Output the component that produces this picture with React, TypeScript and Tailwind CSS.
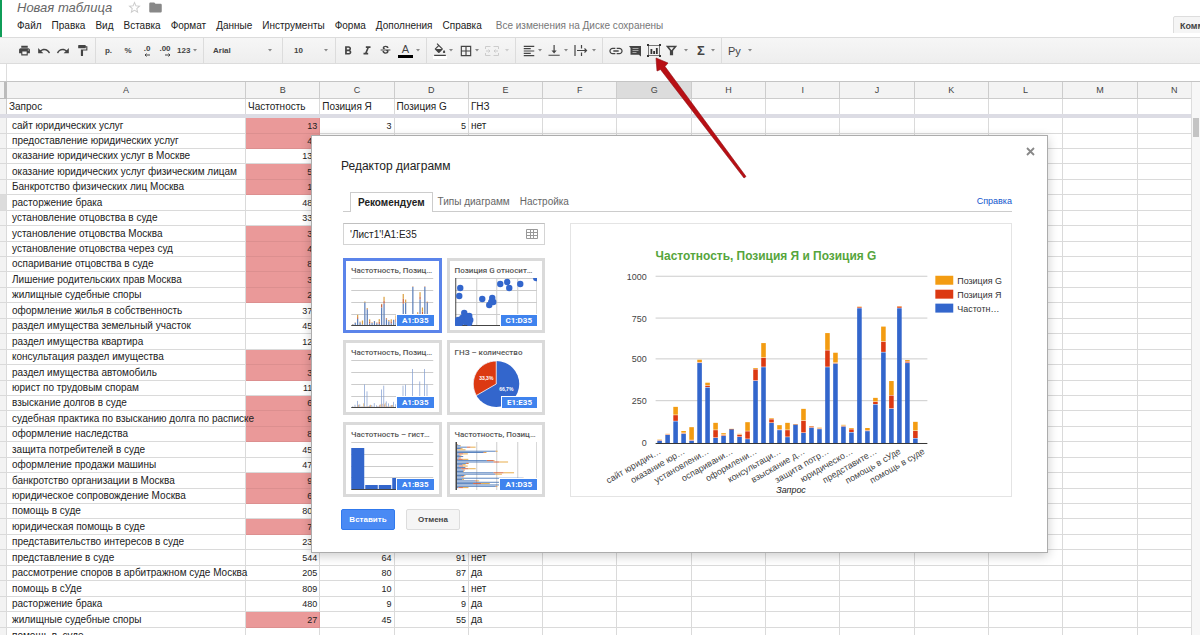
import type { ReactNode } from 'react';
import {
  MdPrint,
  MdUndo,
  MdRedo,
  MdFormatPaint,
  MdStarBorder,
  MdFolder,
  MdFormatBold,
  MdFormatItalic,
  MdStrikethroughS,
  MdFormatColorFill,
  MdBorderAll,
  MdFormatAlignLeft,
  MdLink,
} from 'react-icons/md';

type Row = { query: string; freq: number; ya: number; g: number; gnz?: string };

const rows: Row[] = [
  { query: 'сайт юридических услуг', freq: 13, ya: 3, g: 5, gnz: 'нет' },
  { query: 'предоставление юридических услуг', freq: 48, ya: 3, g: 4 },
  { query: 'оказание юридических услуг в Москве', freq: 130, ya: 37, g: 50 },
  { query: 'оказание юридических услуг физическим лицам', freq: 55, ya: 4, g: 13 },
  { query: 'Банкротство физических лиц Москва', freq: 13, ya: 3, g: 79 },
  { query: 'расторжение брака', freq: 480, ya: 3, g: 17 },
  { query: 'установление отцовства в суде', freq: 333, ya: 11, g: 18 },
  { query: 'установление отцовства Москва', freq: 30, ya: 47, g: 44 },
  { query: 'установление отцовства через суд', freq: 42, ya: 6, g: 11 },
  { query: 'оспаривание отцовства в суде', freq: 83, ya: 1, g: 1 },
  { query: 'Лишение родительских прав Москва', freq: 36, ya: 13, g: 6 },
  { query: 'жилищные судебные споры', freq: 23, ya: 47, g: 55 },
  { query: 'оформление жилья в собственность', freq: 373, ya: 69, g: 8 },
  { query: 'раздел имущества земельный участок', freq: 455, ya: 56, g: 89 },
  { query: 'раздел имущества квартира', freq: 120, ya: 22, g: 7 },
  { query: 'консультация раздел имущества', freq: 77, ya: 3, g: 27 },
  { query: 'раздел имущества автомобиль', freq: 35, ya: 42, g: 44 },
  { query: 'юрист по трудовым спорам', freq: 110, ya: 1, g: 1 },
  { query: 'взыскание долгов в суде', freq: 60, ya: 73, g: 72 },
  { query: 'судебная практика по взысканию долга по расписке', freq: 91, ya: 8, g: 3 },
  { query: 'оформление наследства', freq: 83, ya: 3, g: 6 },
  { query: 'защита потребителей в суде', freq: 455, ya: 101, g: 104 },
  { query: 'оформление продажи машины', freq: 476, ya: 4, g: 62 },
  { query: 'банкротство организации в Москва', freq: 98, ya: 4, g: 7 },
  { query: 'юридическое сопровождение Москва', freq: 63, ya: 19, g: 8 },
  { query: 'помощь в суде', freq: 809, ya: 7, g: 5 },
  { query: 'юридическая помощь в суде', freq: 71, ya: 3, g: 16 },
  { query: 'представительство интересов в суде', freq: 231, ya: 16, g: 24 },
  { query: 'представление в суде', freq: 544, ya: 64, g: 91, gnz: 'нет' },
  { query: 'рассмотрение споров в арбитражном суде Москва', freq: 205, ya: 80, g: 87, gnz: 'да' },
  { query: 'помощь в сУде', freq: 809, ya: 10, g: 1, gnz: 'нет' },
  { query: 'расторжение брака', freq: 480, ya: 9, g: 9, gnz: 'да' },
  { query: 'жилищные судебные споры', freq: 27, ya: 45, g: 55, gnz: 'да' },
];

const letters = ['A', 'B', 'C', 'D', 'E', 'F', 'G', 'H', 'I', 'J', 'K', 'L', 'M', 'N'];
const emptyColumns = ['F', 'G', 'H', 'I', 'J', 'K', 'L', 'M', 'N'];

const menu = ['Файл', 'Правка', 'Вид', 'Вставка', 'Формат', 'Данные', 'Инструменты', 'Форма', 'Дополнения', 'Справка'];

const BLUE = '#3366cc';
const RED = '#dc3912';
const ORANGE = '#f39c12';

function Caret({ faded = false }: { faded?: boolean }) {
  return (
    <svg viewBox="0 0 4 3" className={faded ? 'h-[3px] w-1 fill-[#ccc]' : 'h-[3px] w-1 fill-[#888]'} aria-hidden="true">
      <path d="M0 0h4L2 2.5z" />
    </svg>
  );
}

function Tool({ label, className, children }: { label: string; className: string; children: ReactNode }) {
  return (
    <button type="button" aria-label={label} className={`flex h-full shrink-0 items-center justify-center ${className}`}>
      {children}
    </button>
  );
}

function DropTool({
  label,
  className,
  faded,
  children,
}: {
  label: string;
  className: string;
  faded?: boolean;
  children: ReactNode;
}) {
  return (
    <button type="button" aria-label={label} className={`flex h-full shrink-0 items-center justify-between px-[3px] ${className}`}>
      {children}
      <Caret faded={faded} />
    </button>
  );
}

function Separator() {
  return <div className="mx-[3px] h-full w-px shrink-0 bg-[#dcdcdc]" />;
}

function DecimalIcon({ text, direction }: { text: string; direction: 'left' | 'right' }) {
  return (
    <span className="flex flex-col items-end">
      <span className="leading-[8px]">{text}</span>
      <svg viewBox="0 0 6 4" className="h-1 w-1.5 stroke-[#444]" fill="none" aria-hidden="true">
        <path d={direction === 'left' ? 'M6 2H1M2.5.5L1 2l1.500 1.500' : 'M0 2h5M3.500.5L5 2 3.500 3.500'} />
      </svg>
    </span>
  );
}

function Toolbar() {
  return (
    <div className="flex h-[27px] shrink-0 items-stretch overflow-hidden border-y border-[#dcdcdc] bg-linear-to-b from-[#f6f6f6] to-[#eee] pl-[14px] text-[8px] font-bold text-[#444]">
      <Tool label="Печать" className="w-5"><MdPrint size={13} /></Tool>
      <Tool label="Отменить" className="w-[19px]"><MdUndo size={14} /></Tool>
      <Tool label="Повторить" className="w-5"><MdRedo size={14} /></Tool>
      <Tool label="Копировать форматирование" className="w-[19px]"><MdFormatPaint size={13} /></Tool>
      <Separator />
      <Tool label="Денежный формат" className="w-[19px]">р.</Tool>
      <Tool label="Процентный формат" className="w-5">%</Tool>
      <Tool label="Уменьшить число знаков" className="w-[18px]"><DecimalIcon text=".0" direction="left" /></Tool>
      <Tool label="Увеличить число знаков" className="w-[18px]"><DecimalIcon text=".00" direction="right" /></Tool>
      <DropTool label="Другие форматы" className="w-[26px]">123</DropTool>
      <Separator />
      <DropTool label="Шрифт" className="w-[72px] pr-[7px] pl-[6px]">Arial</DropTool>
      <Separator />
      <DropTool label="Размер шрифта" className="w-[46px] pr-1 pl-2">10</DropTool>
      <Separator />
      <Tool label="Полужирный" className="w-[18px]"><MdFormatBold size={14} /></Tool>
      <Tool label="Курсив" className="w-[19px]"><MdFormatItalic size={14} /></Tool>
      <Tool label="Зачеркнутый" className="w-[19px]"><MdStrikethroughS size={13} /></Tool>
      <DropTool label="Цвет текста" className="w-7">
        <span className="w-[15px] border-b-[3px] border-black text-center text-[11px] leading-[11px] font-normal">A</span>
      </DropTool>
      <Separator />
      <DropTool label="Цвет заливки" className="w-[26px]">
        <span className="border-b-[3px] border-white"><MdFormatColorFill size={14} viewBox="0 0 24 20" /></span>
      </DropTool>
      <DropTool label="Границы" className="w-[26px]"><MdBorderAll size={14} /></DropTool>
      <DropTool label="Объединить ячейки" className="w-[30px]" faded>
        <svg viewBox="0 0 14 10" className="h-[10px] w-[14px] stroke-[#ccc]" fill="none" aria-hidden="true">
          <path d="M.5 3V.5h5M8.500.5h5V3M.5 7v2.500h5M8.500 9.500h5V7M1 5h4M9 5h4M3.500 3.500L5 5 3.500 6.500M10.500 3.500L9 5l1.500 1.500" />
        </svg>
      </DropTool>
      <Separator />
      <DropTool label="Выравнивание по горизонтали" className="w-[26px]"><MdFormatAlignLeft size={14} /></DropTool>
      <DropTool label="Выравнивание по вертикали" className="w-[26px]">
        <svg viewBox="0 0 12 11" className="h-[11px] w-3 fill-[#444]" aria-hidden="true">
          <path d="M5.500 0h1.200v5.500h2L6.100 8.500 3.500 5.500h2zM.5 9.700h11.200v1H.5z" />
        </svg>
      </DropTool>
      <DropTool label="Перенос текста" className="w-7">
        <svg viewBox="0 0 14 11" className="h-[11px] w-[14px] stroke-[#444]" fill="none" aria-hidden="true">
          <path d="M1 0v11M3 5.500h9.500M10.500 3.500l2 2-2 2M7.500 0v3.500M7.500 7.500V11" strokeWidth="1.200" />
        </svg>
      </DropTool>
      <Separator />
      <Tool label="Вставить ссылку" className="w-[19px]"><MdLink size={16} /></Tool>
      <Tool label="Вставить комментарий" className="w-5">
        <svg viewBox="0 0 12 12" className="size-3" aria-hidden="true">
          <path d="M0 1h12v10.500L9.800 9.800H1.500V3z" fill="#444" />
          <path d="M3.500 3.500h6M3.500 5.500h6M3.500 7.500h4" stroke="#bbb" strokeWidth=".8" />
        </svg>
      </Tool>
      <Tool label="Вставить диаграмму" className="w-[18px]">
        <svg viewBox="0 0 14 13" className="h-[13px] w-[14px]" fill="none" aria-hidden="true">
          <path d="M1.500 1.500h11v10h-11z" stroke="#777" />
          <path d="M0 0h2v2H0zM12 0h2v2h-2zM0 11h2v2H0zM12 11h2v2h-2zM3.500 5h1.800v5H3.500zM6.200 7H8v3H6.200zM8.900 4h1.800v6H8.900z" fill="#333" />
        </svg>
      </Tool>
      <DropTool label="Фильтр" className="w-7">
        <svg viewBox="0 0 11 11" className="size-[11px]" fill="none" aria-hidden="true">
          <path d="M1.500 1.500h8L6.300 5.500v4H4.700v-4z" stroke="#444" strokeWidth="1.600" />
        </svg>
      </DropTool>
      <DropTool label="Функции" className="w-[27px]">
        <span className="pl-[3px] text-[13px] leading-3">Σ</span>
      </DropTool>
      <Separator />
      <DropTool label="Способ ввода" className="w-[30px]">
        <span className="text-[11px] leading-3 font-normal">Ру</span>
      </DropTool>
    </div>
  );
}

function Header() {
  return (
    <header className="flex h-[37px] shrink-0 items-stretch overflow-hidden border-l-2 border-[#0f9d58] bg-white pl-[15px]">
      <div className="flex min-w-0 grow flex-col">
        <div className="flex h-[15px] items-center">
          <h1 className="text-[13px] leading-[15px] text-[#666] italic">Новая таблица</h1>
          <button type="button" aria-label="Пометить" className="ml-[15px] text-[#ccc]"><MdStarBorder size={15} /></button>
          <button type="button" aria-label="Переместить в папку" className="ml-1.5 text-[#888]"><MdFolder size={15} /></button>
        </div>
        <nav className="flex h-5 items-center gap-[10px] text-[10px] whitespace-nowrap text-[#222]">
          {menu.map((item) => (
            <button type="button" key={item}>{item}</button>
          ))}
          <span className="ml-1 text-[#777]">Все изменения на Диске сохранены</span>
        </nav>
      </div>
      <div className="mt-3 h-[21px] w-[27px] shrink-0 overflow-hidden">
        <button type="button" className="h-full rounded-xs border border-[#ddd] bg-[#f5f5f5] px-1.5 text-[9px] font-bold text-[#444]">
          Комментарии
        </button>
      </div>
    </header>
  );
}

function cellClass(extra: string) {
  return `border-r border-b border-[#dadada] p-0 whitespace-nowrap ${extra}`;
}

function Sheet() {
  return (
    <div className="flex min-h-0 grow border-t border-[#c4c4c4]">
      <div className="min-w-0 grow overflow-hidden">
        <table className="w-[calc(100%+21px)] table-fixed border-separate border-spacing-0 text-[9px] leading-[14px] text-[#222]">
          <colgroup>
            <col className="w-[7px]" />
            <col className="w-[239px]" />
            {letters.slice(1).map((letter) => (
              <col key={letter} />
            ))}
          </colgroup>
          <thead>
            <tr className="h-[17px] bg-[#f3f3f3]">
              <td className="border-r-[3px] border-b border-[#bbb] p-0" />
              {letters.map((letter) => (
                <th
                  key={letter}
                  scope="col"
                  className={
                    letter === 'G'
                      ? 'border-r border-b border-[#ccc] bg-[#dcdcdc] p-0 font-normal text-[#444]'
                      : 'border-r border-b border-[#ccc] p-0 font-normal text-[#444]'
                  }
                >
                  {letter}
                </th>
              ))}
            </tr>
            <tr className="h-[15px] text-[10px]">
              <td className="border-r border-[#ccc] bg-[#f3f3f3] p-0" />
              {['Запрос', 'Частотность', 'Позиция Я', 'Позиция G', 'ГНЗ'].map((title) => (
                <td key={title} className="border-r border-[#dadada] p-0 pl-[2px] whitespace-nowrap">{title}</td>
              ))}
              {emptyColumns.map((letter) => (
                <td key={letter} className="border-r border-[#dadada] p-0" />
              ))}
            </tr>
            <tr className="h-1">
              <td colSpan={15} className="bg-[#dcdce4] p-0" />
            </tr>
          </thead>
          <tbody>
            {rows.map((row, i) => (
              <tr key={i} className={(i * 7) % 16 < 7 ? 'h-4' : 'h-[15px]'}>
                <td className={i === 5 ? cellClass('bg-[#dcdcdc]') : cellClass('bg-[#f3f3f3]')} />
                <td className={cellClass('pl-[5px] text-[10px]')}>{row.query}</td>
                <td
                  className={
                    row.freq < 100
                      ? 'border-r border-b border-[#dc8f8f] bg-[#ea9999] p-0 pr-[2px] text-right'
                      : cellClass('pr-[2px] text-right')
                  }
                >
                  {row.freq}
                </td>
                <td className={cellClass('pr-[2px] text-right')}>{row.gnz && row.ya}</td>
                <td className={cellClass('pr-[2px] text-right')}>{row.gnz && row.g}</td>
                <td className={cellClass('pl-[2px] text-[10px]')}>{row.gnz}</td>
                {emptyColumns.map((letter) => (
                  <td key={letter} className={cellClass('')} />
                ))}
              </tr>
            ))}
            <tr className="h-4">
              <td className={cellClass('bg-[#f3f3f3]')} />
              <td className={cellClass('pl-[5px] text-[10px]')}>помощь в&nbsp; суде</td>
              {letters.slice(1).map((letter) => (
                <td key={letter} className={cellClass('')} />
              ))}
            </tr>
          </tbody>
        </table>
      </div>
      <div className="flex w-[9px] shrink-0 flex-col border-l border-[#ddd] bg-[#f7f7f7] pt-9">
        <div className="mx-px h-[19px] bg-[#c4c4c4]" />
      </div>
    </div>
  );
}

function StackedThumb({ thin }: { thin?: boolean }) {
  const scale = 0.047;
  return (
    <>
      {[0.5, 12.5, 24.5, 36.5].map((y) => (
        <path key={y} d={`M0 ${y}h82`} stroke="#ccc" />
      ))}
      {rows.map((row, i) => {
        const x = 1 + i * 2.4;
        const blue = row.freq * scale;
        const red = row.ya * scale;
        const orange = row.g * scale;
        return thin ? (
          <g key={i}>
            <rect x={x} y={47 - blue} width=".7" height={blue} fill="#7f9bd0" />
            <rect x={x + 0.8} y={47 - red} width=".6" height={red} fill="#c98a6a" />
            <rect x={x + 1.4} y={47 - orange} width=".6" height={orange} fill="#d9a860" />
          </g>
        ) : (
          <g key={i}>
            <rect x={x} y={47 - blue} width="1.200" height={blue} fill="#5a7db8" />
            <rect x={x} y={47 - blue - red} width="1.200" height={red} fill="#c9603c" />
            <rect x={x} y={47 - blue - red - orange} width="1.200" height={orange} fill="#dba040" />
          </g>
        );
      })}
      <path d="M0 47.500h82" stroke="#444" />
    </>
  );
}

const scatterPoints = [
  [5, 10], [4, 18], [45, 6], [52, 4], [54, 10], [65, 6], [81, 0], [27, 21], [37, 20], [38, 24], [34, 27], [36, 24],
  [9, 35], [3, 42], [7, 40], [11, 38], [14, 38], [15, 42], [5, 45], [10, 44], [14, 45], [2, 45], [12, 41],
];

function ScatterThumb() {
  return (
    <>
      <path d="M0 .5h82M0 12.500h82M0 24.500h82M0 36.500h82M21.500 0v48M41.500 0v48M62.500 0v48M81.500 0v48" stroke="#ccc" fill="none" />
      <path d="M.5 0v47.500H82" stroke="#444" fill="none" />
      {scatterPoints.map(([x, y], i) => (
        <circle key={i} cx={x} cy={y} r="3.200" fill={BLUE} />
      ))}
    </>
  );
}

function PieThumb() {
  return (
    <>
      <circle cx="41" cy="24" r="23" fill={BLUE} />
      <path d="M41 24V1a23 23 0 0 0-19.900 34.500z" fill={RED} stroke="#fff" strokeWidth=".8" />
      <g fill="#fff" fontSize="5" fontWeight="700" textAnchor="middle">
        <text x="31" y="20">33,3%</text>
        <text x="51" y="31">66,7%</text>
      </g>
    </>
  );
}

function HistogramThumb() {
  return (
    <>
      <path d="M0 .5h82M0 12.500h82M0 24.500h82M0 35.500h82" stroke="#ccc" />
      <path d="M0 6h13v41H0zM14 43h12.500v4H14zM27.500 43H40v4H27.500zM41 36h12v11H41z" fill={BLUE} />
      <path d="M0 47.500h82" stroke="#444" />
    </>
  );
}

function BarThumb() {
  return (
    <>
      <path d="M21.500 0v48M41.500 0v48M62.500 0v48M81.500 0v48" stroke="#ccc" />
      {rows.map((row, i) => {
        const y = 2 + i * 1.35;
        const blue = row.freq * 0.082;
        return (
          <g key={i}>
            <rect x="1" y={y} width={blue} height=".9" fill="#4a78b8" />
            <rect x={1 + blue} y={y} width={row.ya * 0.1} height=".9" fill="#d2552c" />
            <rect x={1 + blue + row.ya * 0.1} y={y} width={row.g * 0.1} height=".9" fill="#e5a53a" />
          </g>
        );
      })}
      <path d="M1 0v48" stroke="#444" strokeWidth="1.500" />
    </>
  );
}

const thumbs: { title: string; range: string; chart: ReactNode; selected?: boolean }[] = [
  { title: 'Частотность, Позиц…', range: 'A1:D35', chart: <StackedThumb />, selected: true },
  { title: 'Позиция G относит…', range: 'C1:D35', chart: <ScatterThumb /> },
  { title: 'Частотность, Позиц…', range: 'A1:D35', chart: <StackedThumb thin /> },
  { title: 'ГНЗ – количество', range: 'E1:E35', chart: <PieThumb /> },
  { title: 'Частотность – гист…', range: 'A1:B35', chart: <HistogramThumb /> },
  { title: 'Частотность, Позиц…', range: 'A1:D35', chart: <BarThumb /> },
];

const axisLabels = [
  'сайт юридич…', 'оказание юр…', 'установлени…', 'оспаривани…', 'оформлени…', 'консультаци…',
  'взыскание д…', 'защита потр…', 'юридическо…', 'представите…', 'помощь в сУде', 'помощь в суде',
];

function Chart() {
  const left = 85;
  const base = 220;
  const scale = 0.1673;
  const step = 8.03;
  return (
    <svg viewBox="0 0 442 273" className="block w-full" role="img" aria-label="Частотность, Позиция Я и Позиция G">
      <text x={left} y="36" fontSize="12" fontWeight="700" fill="#56a53c">Частотность, Позиция Я и Позиция G</text>
      {[1000, 750, 500, 250, 0].map((value) => {
        const y = Math.round(base - value * scale);
        return (
          <g key={value}>
            {value > 0 && <path d={`M${left} ${y - 0.5}H358`} stroke="#ccc" />}
            <text x="76" y={y + 3} fontSize="9" textAnchor="end" fill="#444">{value}</text>
          </g>
        );
      })}
      {rows.map((row, i) => {
        const x = left + step * i + 1.7;
        const blue = row.freq * scale;
        const red = row.ya * scale;
        const orange = row.g * scale;
        return (
          <g key={i}>
            <rect x={x} y={base - blue} width="4.600" height={blue} fill={BLUE} />
            <rect x={x} y={base - blue - red} width="4.600" height={Math.max(red - 0.5, 0.3)} fill={RED} />
            <rect x={x} y={base - blue - red - orange} width="4.600" height={Math.max(orange - 0.5, 0.3)} fill={ORANGE} />
          </g>
        );
      })}
      <path d={`M${left} ${base + 0.5}H358`} stroke="#333" />
      {axisLabels.map((label, i) => (
        <text
          key={label}
          fontSize="9"
          textAnchor="end"
          fill="#444"
          transform={`translate(${left + 6 + i * step * 3} 230) rotate(-30)`}
        >
          {label}
        </text>
      ))}
      <text x="221" y="270" fontSize="9" fontStyle="italic" textAnchor="middle" fill="#222">Запрос</text>
      {[
        { label: 'Позиция G', color: ORANGE },
        { label: 'Позиция Я', color: RED },
        { label: 'Частотн…', color: BLUE },
      ].map((item, i) => (
        <g key={item.label}>
          <rect x="366" y={52 + i * 14} width="18" height="9" fill={item.color} />
          <text x="388" y={60 + i * 14} fontSize="9" fill="#333">{item.label}</text>
        </g>
      ))}
    </svg>
  );
}

function ChartEditor() {
  return (
    <section
      role="dialog"
      aria-labelledby="editor-title"
      className="absolute top-[135px] left-[311px] flex w-[737px] flex-col border border-[#acacac] bg-white pt-[23px] pr-[35px] pb-[22px] pl-[29px] shadow-[0_3px_10px_rgba(0,0,0,0.2)]"
    >
      <button type="button" aria-label="Закрыть" className="absolute top-[11px] right-3">
        <svg viewBox="0 0 9 9" className="size-[9px]" fill="none" aria-hidden="true">
          <path d="M1 1l7 7M8 1L1 8" stroke="#888" strokeWidth="1.800" />
        </svg>
      </button>
      <h2 id="editor-title" className="text-[12px] leading-[14px] text-[#222]">Редактор диаграмм</h2>
      <div className="mt-[19px] ml-0.5 flex h-5 items-end border-b border-[#ccc] pl-[7px] text-[10px] text-[#666]" role="tablist">
        <button type="button" role="tab" aria-selected="true" className="-mb-px h-5 border border-b-0 border-[#ccc] bg-white px-[7px] font-bold text-[#222]">
          Рекомендуем
        </button>
        <button type="button" role="tab" aria-selected="false" className="h-[19px] px-[5px]">Типы диаграмм</button>
        <button type="button" role="tab" aria-selected="false" className="h-[19px] px-[5px]">Настройка</button>
        <a href="#help" className="ml-auto h-[19px] text-[9px] leading-[19px] text-[#1155cc]">Справка</a>
      </div>
      <div className="mt-[11px] ml-0.5 flex items-start gap-[25px]">
        <div className="flex w-[202px] shrink-0 flex-col gap-[13px]">
          <div className="relative flex h-[22px] items-center border border-[#d4d4d4] border-t-[#c0c0c0]">
            <input
              aria-label="Диапазон данных"
              defaultValue="'Лист1'!A1:E35"
              className="h-full w-full bg-transparent pr-6 pl-1.5 text-[10px] text-[#222] outline-none"
            />
            <button type="button" aria-label="Выбрать диапазон" className="absolute right-1.5">
              <svg viewBox="0 0 12 10" className="h-[10px] w-3" fill="none" stroke="#999" aria-hidden="true">
                <path d="M.5.5h11v9H.5zM0 3.500h12M0 6.500h12M4.500 0v10M7.500 0v10" />
              </svg>
            </button>
          </div>
          <div className="grid grid-cols-2 gap-x-[5px] gap-y-[7px]">
            {thumbs.map((thumb, i) => (
              <button
                type="button"
                key={i}
                className={
                  thumb.selected
                    ? 'relative flex h-[75px] flex-col border-[3px] border-[#5b84ea] px-[5px] pt-1 text-left'
                    : 'relative flex h-[75px] flex-col border-[3px] border-[#dadada] px-[5px] pt-1 text-left'
                }
              >
                <span className="h-[13px] font-['Roboto'] text-[8px] leading-[11px] font-medium whitespace-nowrap text-[#555]">
                  {thumb.title}
                </span>
                <svg viewBox="0 0 82 48" className="h-12 w-full overflow-hidden" aria-hidden="true">{thumb.chart}</svg>
                <span className="absolute right-[5px] bottom-1 h-3 border-t border-l border-white bg-[#3f83ee] px-[5px] font-['Roboto'] text-[8px] leading-[11px] font-bold text-white">
                  {thumb.range}
                </span>
              </button>
            ))}
          </div>
        </div>
        <div className="min-w-0 grow border border-[#e4e4e4]">
          <Chart />
        </div>
      </div>
      <div className="mt-3 flex gap-[11px] text-[8px] font-bold">
        <button type="button" className="h-[21px] w-[54px] rounded-xs border border-[#3079ed] bg-[#4a8af4] text-white">Вставить</button>
        <button type="button" className="h-[21px] w-[54px] rounded-xs border border-[#ddd] bg-[#f5f5f5] text-[#444]">Отмена</button>
      </div>
    </section>
  );
}

export default function App() {
  return (
    <div className="relative flex h-screen flex-col overflow-hidden bg-white font-['Liberation_Sans',sans-serif]">
      <Header />
      <Toolbar />
      <div className="flex h-[17px] shrink-0 pl-1.5">
        <input aria-label="Строка формул" className="w-full border-l border-[#ddd] px-1 text-[9px] outline-none" />
      </div>
      <Sheet />
      <ChartEditor />
      <svg viewBox="0 0 92 122" className="pointer-events-none absolute top-[57px] left-[655px] h-[122px] w-[92px]" aria-hidden="true">
        <path d="M1 1l12 5-3 3.500L91 119.500l-2 1.500L5.500 12.500 2 14z" fill="#b80f14" stroke="#8f0c10" strokeWidth=".6" />
      </svg>
    </div>
  );
}
